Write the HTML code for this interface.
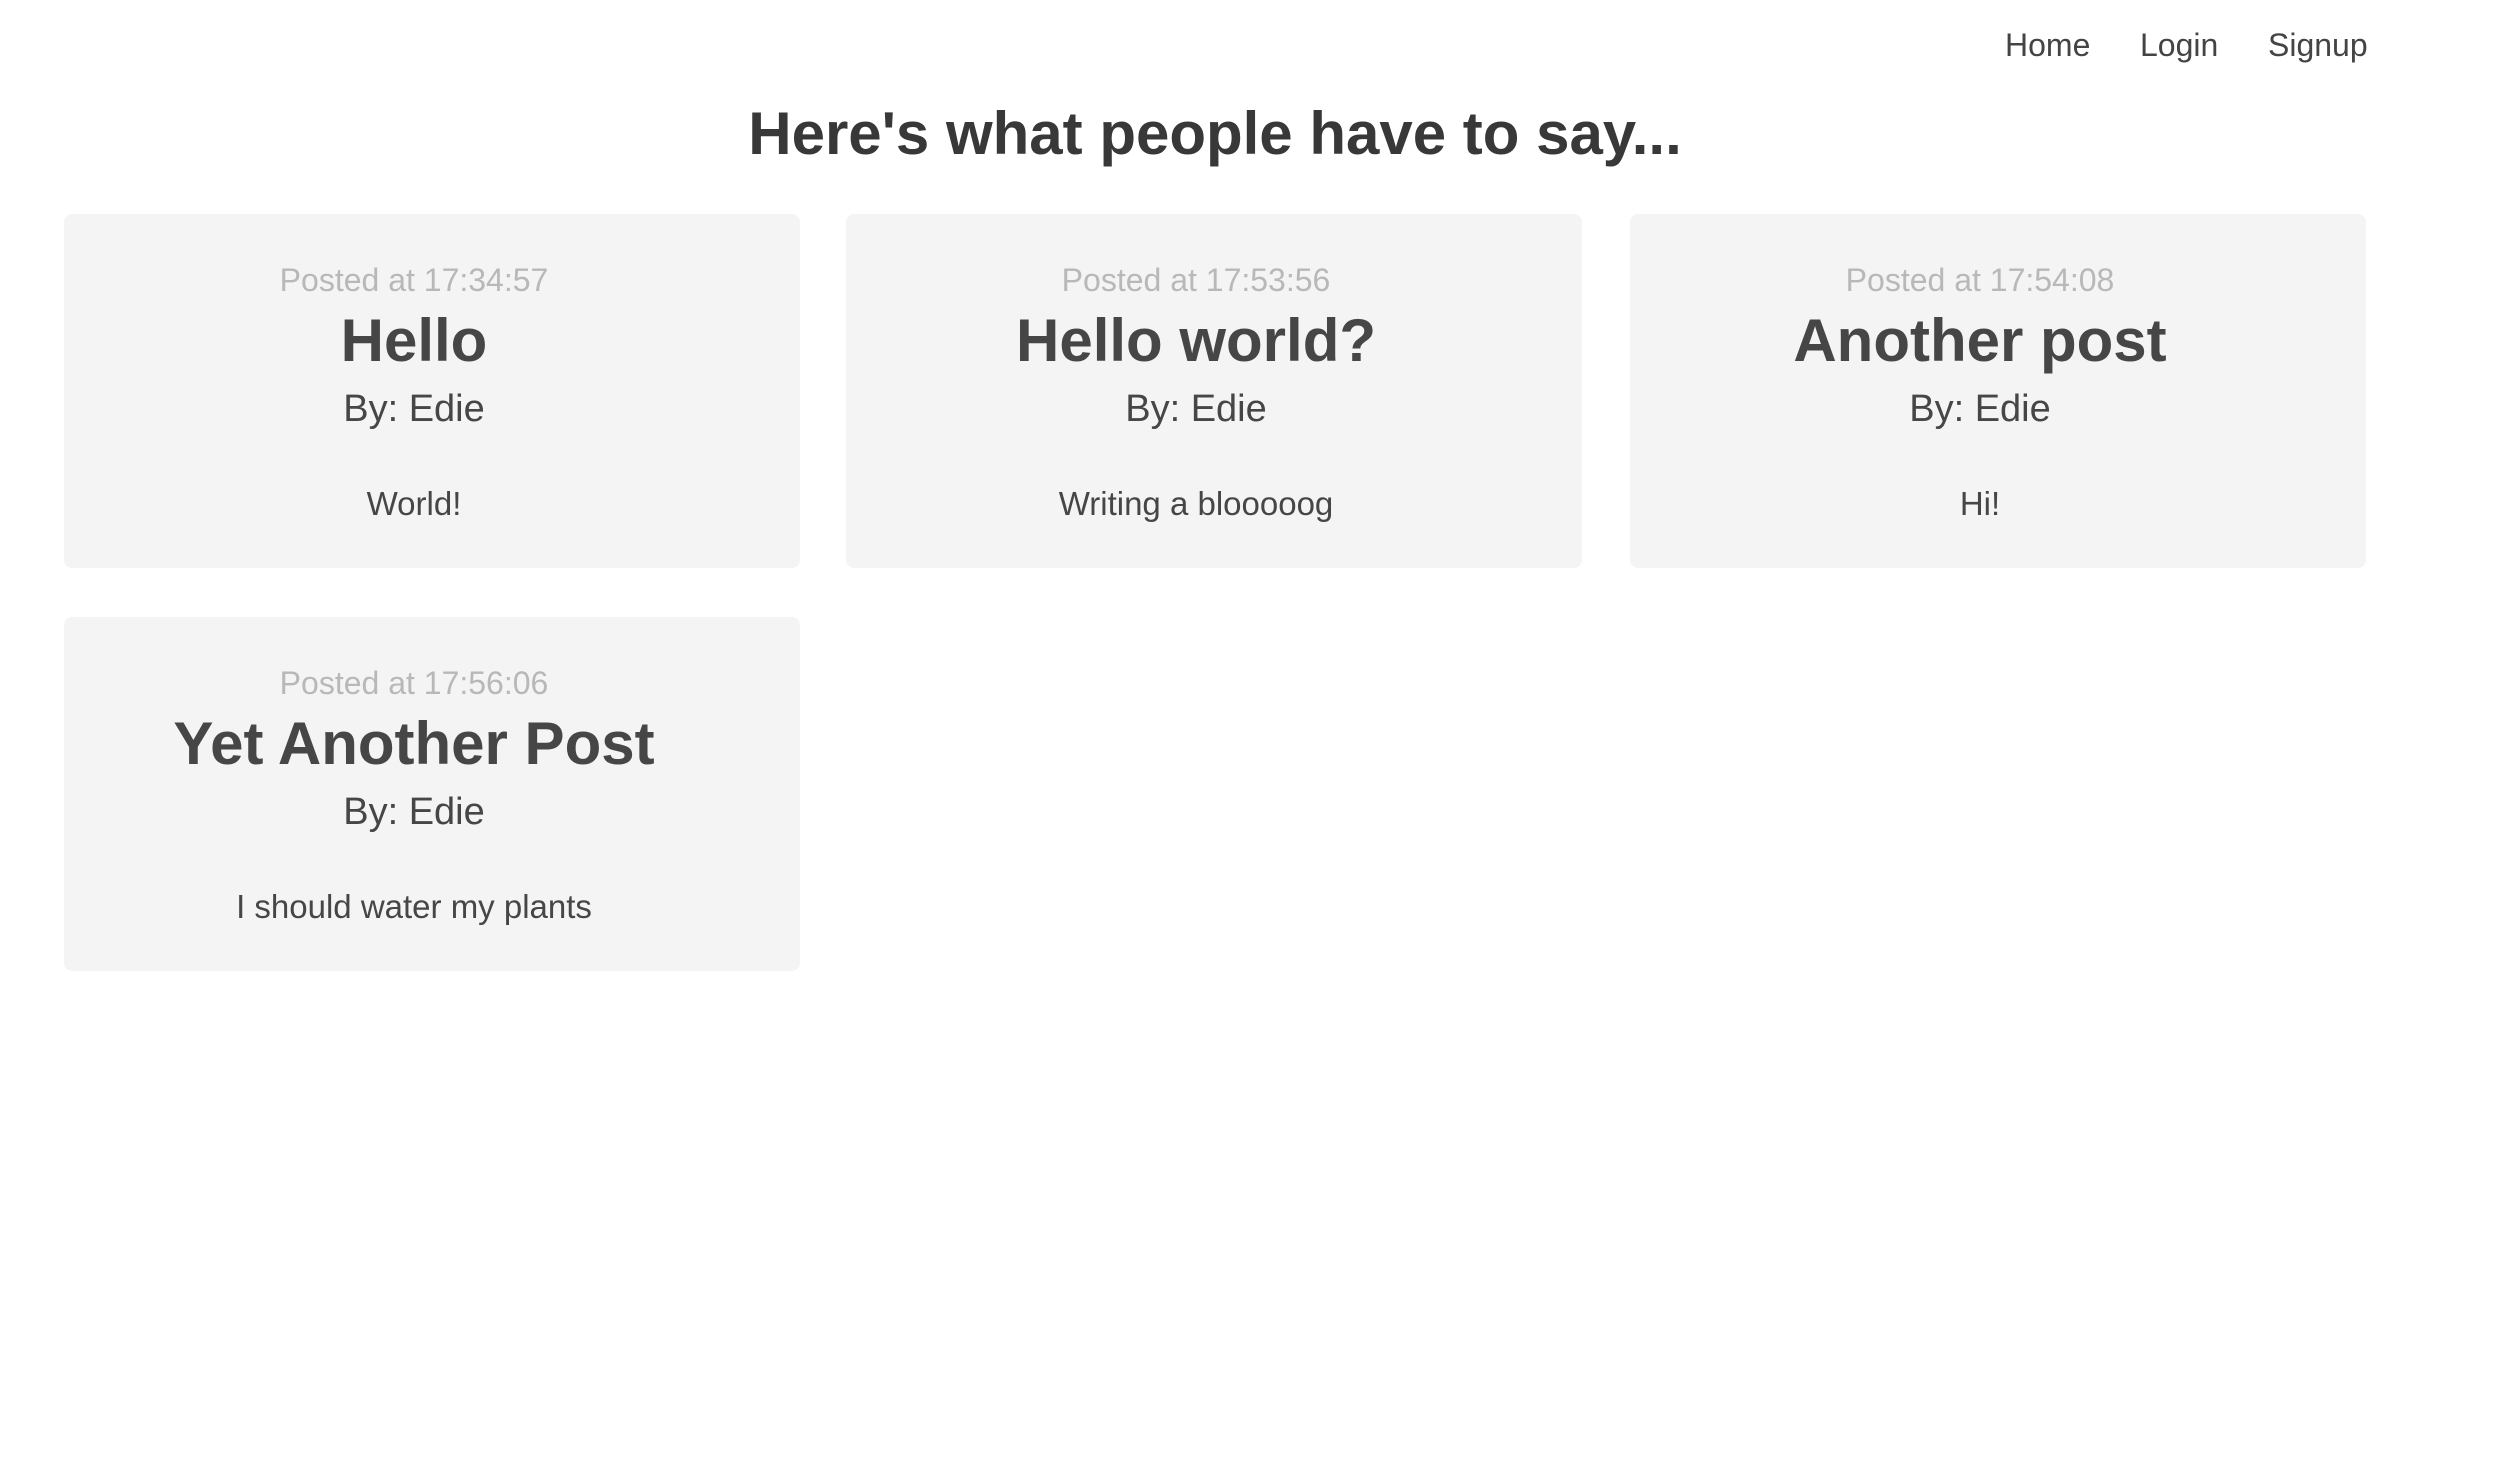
<!DOCTYPE html>
<html><head><meta charset="utf-8"><style>
html,body{margin:0;padding:0;background:#fff;width:2498px;height:1482px;overflow:hidden;font-family:"Liberation Sans",sans-serif;}
.nav{position:absolute;top:29px;font-size:32px;line-height:1;color:#444;}
h1{position:absolute;left:64px;width:2302px;top:104px;margin:0;font-size:60px;line-height:1;text-align:center;color:#383838;font-weight:bold;}
.card{position:absolute;width:736px;height:354px;background:#f4f4f4;border-radius:8px;}
.card div{position:absolute;left:0;width:700px;text-align:center;line-height:1;}
.p{top:50px;font-size:32px;color:#b8b8b8;}
.t{top:97px;font-size:60px;font-weight:bold;color:#464646;}
.b{top:176px;font-size:38px;color:#464646;}
.x{top:273px;font-size:33px;color:#464646;}
</style></head><body>
<div class="nav" style="left:2005px">Home</div>
<div class="nav" style="left:2140px">Login</div>
<div class="nav" style="left:2268px">Signup</div>
<h1>Here's what people have to say...</h1>
<div class="card" style="left:64px;top:214px"><div class="p">Posted at 17:34:57</div><div class="t">Hello</div><div class="b">By: Edie</div><div class="x">World!</div></div>
<div class="card" style="left:846px;top:214px"><div class="p">Posted at 17:53:56</div><div class="t">Hello world?</div><div class="b">By: Edie</div><div class="x">Writing a blooooog</div></div>
<div class="card" style="left:1630px;top:214px"><div class="p">Posted at 17:54:08</div><div class="t">Another post</div><div class="b">By: Edie</div><div class="x">Hi!</div></div>
<div class="card" style="left:64px;top:617px"><div class="p">Posted at 17:56:06</div><div class="t">Yet Another Post</div><div class="b">By: Edie</div><div class="x">I should water my plants</div></div>
</body></html>
